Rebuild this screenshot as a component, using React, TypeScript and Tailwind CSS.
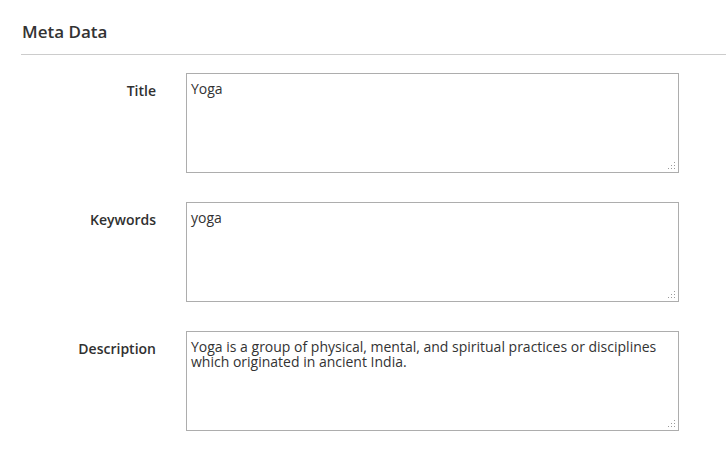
const F = [
  { label: "Title", value: "Yoga" },
  { label: "Keywords", value: "yoga" },
  { label: "Description", value: "Yoga is a group of physical, mental, and spiritual practices or disciplines which originated in ancient India." },
];

function Grip() {
  return (
    <svg className="absolute right-[2px] bottom-[2px]" width="9" height="9" viewBox="0 0 9 9">
      {[[7, 1], [4, 4], [7, 4], [1, 7], [4, 7], [7, 7]].map(([x, y]) => (
        <rect key={`${x}-${y}`} x={x} y={y} width="1" height="1" fill="#9a9a9a" />
      ))}
    </svg>
  );
}

export default function App() {
  return (
    <div className="w-[726px] h-[471px] bg-white pl-[21px] pt-[20px]" style={{ fontFamily: '"Open Sans", sans-serif' }}>
      <h2 className="text-[17px] leading-[23px] font-semibold text-[#333333] pl-px">Meta Data</h2>
      <div className="h-px bg-[#cccccc] mt-[11px]" />
      <div className="flex flex-col gap-[29px] mt-[18px]">
        {F.map((f) => (
          <div key={f.label} className="flex">
            <label className="w-[135px] shrink-0 text-right text-[14px] leading-[19px] font-semibold text-[#303030] pt-[8px]">{f.label}</label>
            <div className="relative ml-[30px] w-[493px] h-[100px] border border-[#adadad] bg-white">
              <textarea
                readOnly
                value={f.value}
                className="w-full h-full resize-none outline-none px-[4px] pt-[7px] text-[14px] leading-[15px] text-[#333333] bg-transparent"
                style={{ fontFamily: '"Open Sans", sans-serif' }}
              />
              <Grip />
            </div>
          </div>
        ))}
      </div>
    </div>
  );
}
